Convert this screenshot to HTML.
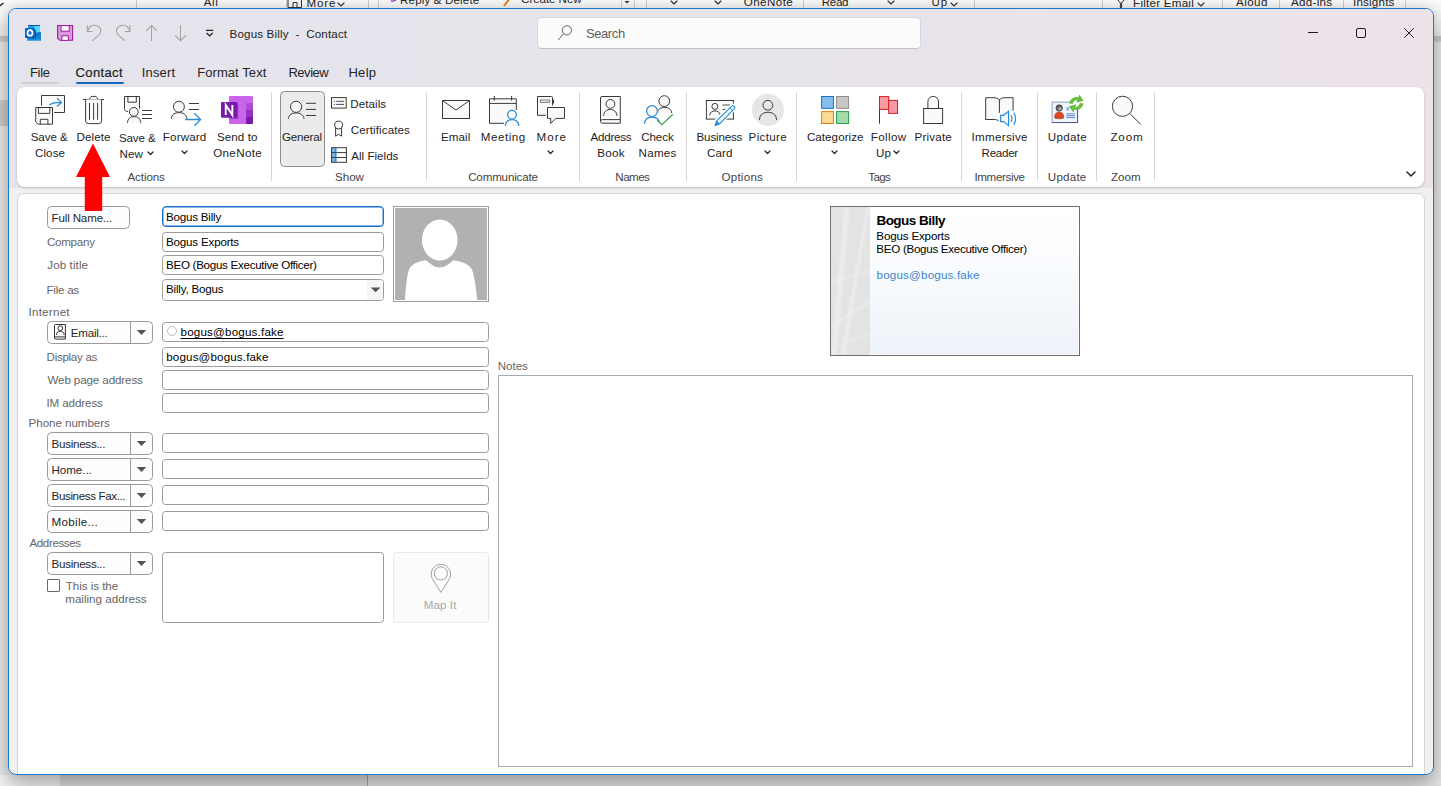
<!DOCTYPE html>
<html><head><meta charset="utf-8"><title>Bogus Billy - Contact</title>
<style>
html,body{margin:0;padding:0;}
body{width:1441px;height:786px;overflow:hidden;position:relative;background:#f0f0f0;font-family:"Liberation Sans",sans-serif;}
.a{position:absolute;box-sizing:border-box;}
.t{position:absolute;white-space:pre;}
svg{position:absolute;overflow:visible;}
#win{position:absolute;left:8px;top:8px;width:1426px;height:767px;box-sizing:border-box;border:1px solid #1b78cc;border-radius:8px;overflow:hidden;background:#f0f0f0;}
#winshadow{position:absolute;left:8px;top:8px;width:1426px;height:767px;border-radius:8px;box-shadow:0 12px 26px 2px rgba(0,0,0,.30),0 0 10px rgba(0,0,0,.10);}
#lav{position:absolute;left:0;top:0;width:1426px;height:179px;background:linear-gradient(90deg,#e5e4ec 0%,#e7e4eb 50%,#ece3e9 100%);}
#ribbon{position:absolute;left:17px;top:87px;width:1407px;height:100px;background:#fff;border-radius:8px;box-shadow:0 1px 3px rgba(0,0,0,.18);}
#panel{position:absolute;left:17px;top:193px;width:1408px;height:600px;background:#fff;border:1px solid #d4d4d4;border-radius:7px;box-sizing:border-box;}
.sep{position:absolute;top:92px;height:89px;width:1px;background:#d6d6d6;}
.inp{position:absolute;box-sizing:border-box;border:1px solid #9b9b9b;border-radius:3.5px;background:#fff;}
.btn{position:absolute;box-sizing:border-box;border:1px solid #9a9a9a;border-radius:4.5px;background:#fdfdfd;}

</style></head><body>
<div class="a" id="bgtop" style="left:0;top:0;width:1441px;height:36px;background:linear-gradient(#fbfbfb,#f3f3f3);"></div><div class="a" style="left:0;top:36px;width:1441px;height:6px;background:linear-gradient(#c9c9c9,#d6d6d6);"></div><div class="a" style="left:0;top:42px;width:1441px;height:744px;background:#f0f0f0;"></div><div class="a" style="left:0;top:100px;width:9px;height:26px;background:#d2d2d2;"></div><div class="a" style="left:0;top:775px;width:60px;height:11px;background:#fbfbfb;"></div><div class="a" style="left:60px;top:775px;width:307px;height:11px;background:#e4e4e4;"></div><div class="a" style="left:367px;top:775px;width:1074px;height:11px;background:#ececec;"></div><div class="a" style="left:367px;top:42px;width:1px;height:744px;background:#b0b0b0;"></div><span class="t " style="left:203.73px;top:-5px;font-size:11.6px;line-height:14px;letter-spacing:0.570px;color:#262626;">All</span>
<span class="t " style="left:306.56px;top:-4px;font-size:11.6px;line-height:14px;letter-spacing:0.844px;color:#262626;">More</span>
<span class="t " style="left:400.06px;top:-7px;font-size:11.6px;line-height:14px;letter-spacing:0.144px;color:#262626;">Reply &amp; Delete</span>
<span class="t " style="left:521.12px;top:-8px;font-size:11.6px;line-height:14px;letter-spacing:-0.075px;color:#262626;">Create New</span>
<span class="t " style="left:743.75px;top:-5px;font-size:11.6px;line-height:14px;letter-spacing:0.443px;color:#262626;">OneNote</span>
<span class="t " style="left:821.76px;top:-5px;font-size:11.6px;line-height:14px;letter-spacing:-0.344px;color:#262626;">Read</span>
<span class="t " style="left:931.41px;top:-5px;font-size:11.6px;line-height:14px;letter-spacing:0.947px;color:#262626;">Up</span>
<span class="t " style="left:1133.06px;top:-4px;font-size:11.6px;line-height:14px;letter-spacing:0.247px;color:#262626;">Filter Email</span>
<span class="t " style="left:1235.98px;top:-5px;font-size:11.6px;line-height:14px;letter-spacing:0.452px;color:#262626;">Aloud</span>
<span class="t " style="left:1290.98px;top:-5px;font-size:11.6px;line-height:14px;letter-spacing:0.302px;color:#262626;">Add-ins</span>
<span class="t " style="left:1352.94px;top:-5px;font-size:11.6px;line-height:14px;letter-spacing:0.217px;color:#262626;">Insights</span>
<div class="a" style="left:136.0px;top:0;width:1px;height:9px;background:#cfcfcf;"></div><div class="a" style="left:286.0px;top:0;width:1px;height:9px;background:#cfcfcf;"></div><div class="a" style="left:367.5px;top:0;width:1px;height:9px;background:#cfcfcf;"></div><div class="a" style="left:377.5px;top:0;width:1px;height:9px;background:#cfcfcf;"></div><div class="a" style="left:620.7px;top:0;width:1px;height:9px;background:#cfcfcf;"></div><div class="a" style="left:634.3px;top:0;width:1px;height:9px;background:#cfcfcf;"></div><div class="a" style="left:645.7px;top:0;width:1px;height:9px;background:#cfcfcf;"></div><div class="a" style="left:802.7px;top:0;width:1px;height:9px;background:#cfcfcf;"></div><div class="a" style="left:974.0px;top:0;width:1px;height:9px;background:#cfcfcf;"></div><div class="a" style="left:1101.7px;top:0;width:1px;height:9px;background:#cfcfcf;"></div><div class="a" style="left:1222.3px;top:0;width:1px;height:9px;background:#cfcfcf;"></div><div class="a" style="left:1279.3px;top:0;width:1px;height:9px;background:#cfcfcf;"></div><div class="a" style="left:1342.7px;top:0;width:1px;height:9px;background:#cfcfcf;"></div><div class="a" style="left:1405.0px;top:0;width:1px;height:9px;background:#cfcfcf;"></div><svg style="left:337.00px;top:2.00px" width="8" height="5"><path d="M1 1 L4.0 4 L7 1" fill="none" stroke="#333" stroke-width="1.1" stroke-linecap="round" stroke-linejoin="round"/></svg><svg style="left:670.00px;top:0.00px" width="8" height="5"><path d="M1 1 L4.0 4 L7 1" fill="none" stroke="#333" stroke-width="1.1" stroke-linecap="round" stroke-linejoin="round"/></svg><svg style="left:714.30px;top:0.00px" width="8" height="5"><path d="M1 1 L4.0 4 L7 1" fill="none" stroke="#333" stroke-width="1.1" stroke-linecap="round" stroke-linejoin="round"/></svg><svg style="left:886.70px;top:0.00px" width="8" height="5"><path d="M1 1 L4.0 4 L7 1" fill="none" stroke="#333" stroke-width="1.1" stroke-linecap="round" stroke-linejoin="round"/></svg><svg style="left:950.00px;top:2.00px" width="8" height="5"><path d="M1 1 L4.0 4 L7 1" fill="none" stroke="#333" stroke-width="1.1" stroke-linecap="round" stroke-linejoin="round"/></svg><svg style="left:1196.50px;top:2.00px" width="8" height="5"><path d="M1 1 L4.0 4 L7 1" fill="none" stroke="#333" stroke-width="1.1" stroke-linecap="round" stroke-linejoin="round"/></svg><svg style="left:0;top:0" width="1441" height="10"><path d="M1116.5 -2 L1120.4 3 L1120.4 9 M1125.5 -2 L1121.6 3 L1121.6 9" stroke="#333" fill="none" stroke-width="1"/><path d="M288 -3 L288 7.5 L301.5 7.5 L301.5 -3 M293 7.5 L293 2.5 L297 2.5 L297 7.5" stroke="#333" fill="none" stroke-width="1"/><path d="M391 1 Q396 2 397 -3" stroke="#9a3ab8" stroke-width="1.4" fill="none"/><path d="M504 6 L510 -2" stroke="#e8820e" stroke-width="2"/><path d="M624.5 1 L627 3.5 L629.5 1" fill="#333"/><path d="M-1 6.4 L3.6 3" stroke="#222" stroke-width="1.4"/></svg><div id="winshadow"></div><div id="win"><div class="a" id="in" style="left:-9px;top:-9px;width:1441px;height:786px;"><div id="lav" style="left:9px;top:9px;"></div><div id="ribbon"></div><div id="panel"></div><span class="t " style="left:229.56px;top:27px;font-size:11.6px;line-height:14px;letter-spacing:0.158px;color:#242424;">Bogus Billy  -  Contact</span>
<div class="a" style="left:537px;top:17px;width:384px;height:32px;background:#fbfbfb;border-radius:4.5px;border:1px solid #d9d7dc;border-bottom-color:#c3c1c7;"></div><span class="t " style="left:585.92px;top:25px;font-size:13px;line-height:17px;letter-spacing:-0.393px;color:#5e5e5e;">Search</span>
<span class="t " style="left:29.94px;top:64px;font-size:13px;line-height:17px;letter-spacing:-0.271px;color:#242424;">File</span>
<span class="t " style="left:75.59px;top:64px;font-size:13px;line-height:17px;letter-spacing:0.365px;color:#242424;-webkit-text-stroke:.22px #1a1a1a;">Contact</span>
<span class="t " style="left:141.81px;top:64px;font-size:13px;line-height:17px;letter-spacing:0.150px;color:#242424;">Insert</span>
<span class="t " style="left:197.19px;top:64px;font-size:13px;line-height:17px;letter-spacing:0.075px;color:#242424;">Format Text</span>
<span class="t " style="left:288.44px;top:64px;font-size:13px;line-height:17px;letter-spacing:-0.469px;color:#242424;">Review</span>
<span class="t " style="left:348.44px;top:64px;font-size:13px;line-height:17px;letter-spacing:0.292px;color:#242424;">Help</span>
<div class="a" style="left:21px;top:82px;width:38px;height:2px;background:#d2d0d2;border-radius:1px;"></div><div class="a" style="left:76px;top:82px;width:48px;height:2.4px;background:#1568c0;border-radius:1.2px;"></div><div class="sep" style="left:271.0px"></div><div class="sep" style="left:426.0px"></div><div class="sep" style="left:579.0px"></div><div class="sep" style="left:686.0px"></div><div class="sep" style="left:796.0px"></div><div class="sep" style="left:961.0px"></div><div class="sep" style="left:1037.0px"></div><div class="sep" style="left:1096.0px"></div><div class="sep" style="left:1154.0px"></div><div class="a" style="left:280px;top:91px;width:45px;height:76px;background:#ebebeb;border:1px solid #8e8e8e;border-radius:4.5px;"></div><span class="t " style="left:30.73px;top:130px;font-size:11.6px;line-height:14px;letter-spacing:-0.087px;color:#242424;">Save &amp;</span>
<span class="t " style="left:34.92px;top:146px;font-size:11.6px;line-height:14px;letter-spacing:0.113px;color:#242424;">Close</span>
<span class="t " style="left:76.56px;top:130px;font-size:11.6px;line-height:14px;letter-spacing:0.087px;color:#242424;">Delete</span>
<span class="t " style="left:118.98px;top:131px;font-size:11.6px;line-height:14px;letter-spacing:-0.138px;color:#242424;">Save &amp;</span>
<span class="t " style="left:119.56px;top:147px;font-size:11.6px;line-height:14px;letter-spacing:0.102px;color:#242424;">New</span>
<span class="t " style="left:162.81px;top:130px;font-size:11.6px;line-height:14px;letter-spacing:0.151px;color:#242424;">Forward</span>
<span class="t " style="left:216.98px;top:130px;font-size:11.6px;line-height:14px;letter-spacing:0.089px;color:#242424;">Send to</span>
<span class="t " style="left:213.20px;top:146px;font-size:11.6px;line-height:14px;letter-spacing:0.359px;color:#242424;">OneNote</span>
<span class="t " style="left:281.92px;top:130px;font-size:11.6px;line-height:14px;letter-spacing:-0.193px;color:#242424;">General</span>
<span class="t " style="left:441.06px;top:130px;font-size:11.6px;line-height:14px;letter-spacing:0.051px;color:#242424;">Email</span>
<span class="t " style="left:480.81px;top:130px;font-size:11.6px;line-height:14px;letter-spacing:0.531px;color:#242424;">Meeting</span>
<span class="t " style="left:536.56px;top:130px;font-size:11.6px;line-height:14px;letter-spacing:1.010px;color:#242424;">More</span>
<span class="t " style="left:590.48px;top:130px;font-size:11.6px;line-height:14px;letter-spacing:-0.227px;color:#242424;">Address</span>
<span class="t " style="left:597.31px;top:146px;font-size:11.6px;line-height:14px;letter-spacing:0.245px;color:#242424;">Book</span>
<span class="t " style="left:641.17px;top:130px;font-size:11.6px;line-height:14px;letter-spacing:-0.078px;color:#242424;">Check</span>
<span class="t " style="left:638.56px;top:146px;font-size:11.6px;line-height:14px;letter-spacing:0.281px;color:#242424;">Names</span>
<span class="t " style="left:696.56px;top:130px;font-size:11.6px;line-height:14px;letter-spacing:-0.172px;color:#242424;">Business</span>
<span class="t " style="left:706.92px;top:146px;font-size:11.6px;line-height:14px;letter-spacing:0.146px;color:#242424;">Card</span>
<span class="t " style="left:748.56px;top:130px;font-size:11.6px;line-height:14px;letter-spacing:0.352px;color:#242424;">Picture</span>
<span class="t " style="left:806.92px;top:130px;font-size:11.6px;line-height:14px;letter-spacing:0.057px;color:#242424;">Categorize</span>
<span class="t " style="left:870.81px;top:130px;font-size:11.6px;line-height:14px;letter-spacing:0.381px;color:#242424;">Follow</span>
<span class="t " style="left:876.11px;top:146px;font-size:11.6px;line-height:14px;letter-spacing:0.047px;color:#242424;">Up</span>
<span class="t " style="left:914.56px;top:130px;font-size:11.6px;line-height:14px;letter-spacing:0.185px;color:#242424;">Private</span>
<span class="t " style="left:971.44px;top:130px;font-size:11.6px;line-height:14px;letter-spacing:0.326px;color:#242424;">Immersive</span>
<span class="t " style="left:981.56px;top:146px;font-size:11.6px;line-height:14px;letter-spacing:-0.281px;color:#242424;">Reader</span>
<span class="t " style="left:1047.86px;top:130px;font-size:11.6px;line-height:14px;letter-spacing:0.303px;color:#242424;">Update</span>
<span class="t " style="left:1110.39px;top:130px;font-size:11.6px;line-height:14px;letter-spacing:0.906px;color:#242424;">Zoom</span>
<span class="t " style="left:350.31px;top:97px;font-size:11.6px;line-height:14px;letter-spacing:0.068px;color:#242424;">Details</span>
<span class="t " style="left:350.67px;top:123px;font-size:11.6px;line-height:14px;letter-spacing:0.114px;color:#242424;">Certificates</span>
<span class="t " style="left:351.23px;top:149px;font-size:11.6px;line-height:14px;letter-spacing:0.016px;color:#242424;">All Fields</span>
<svg style="left:147.00px;top:150.75px" width="7" height="4.5"><path d="M1 1 L3.5 3.5 L6 1" fill="none" stroke="#2a2a2a" stroke-width="1.3" stroke-linecap="round" stroke-linejoin="round"/></svg><svg style="left:181.00px;top:150.25px" width="7" height="4.5"><path d="M1 1 L3.5 3.5 L6 1" fill="none" stroke="#2a2a2a" stroke-width="1.3" stroke-linecap="round" stroke-linejoin="round"/></svg><svg style="left:547.25px;top:149.75px" width="7" height="4.5"><path d="M1 1 L3.5 3.5 L6 1" fill="none" stroke="#2a2a2a" stroke-width="1.3" stroke-linecap="round" stroke-linejoin="round"/></svg><svg style="left:764.00px;top:149.75px" width="7" height="4.5"><path d="M1 1 L3.5 3.5 L6 1" fill="none" stroke="#2a2a2a" stroke-width="1.3" stroke-linecap="round" stroke-linejoin="round"/></svg><svg style="left:831.00px;top:149.75px" width="7" height="4.5"><path d="M1 1 L3.5 3.5 L6 1" fill="none" stroke="#2a2a2a" stroke-width="1.3" stroke-linecap="round" stroke-linejoin="round"/></svg><svg style="left:893.00px;top:150.25px" width="7" height="4.5"><path d="M1 1 L3.5 3.5 L6 1" fill="none" stroke="#2a2a2a" stroke-width="1.3" stroke-linecap="round" stroke-linejoin="round"/></svg><span class="t " style="left:127.48px;top:170px;font-size:11.6px;line-height:14px;letter-spacing:-0.099px;color:#444444;">Actions</span>
<span class="t " style="left:334.98px;top:170px;font-size:11.6px;line-height:14px;letter-spacing:-0.005px;color:#444444;">Show</span>
<span class="t " style="left:468.17px;top:170px;font-size:11.6px;line-height:14px;letter-spacing:-0.169px;color:#444444;">Communicate</span>
<span class="t " style="left:615.31px;top:170px;font-size:11.6px;line-height:14px;letter-spacing:-0.531px;color:#444444;">Names</span>
<span class="t " style="left:721.45px;top:170px;font-size:11.6px;line-height:14px;letter-spacing:0.250px;color:#444444;">Options</span>
<span class="t " style="left:868.25px;top:170px;font-size:11.6px;line-height:14px;letter-spacing:-0.609px;color:#444444;">Tags</span>
<span class="t " style="left:974.44px;top:170px;font-size:11.6px;line-height:14px;letter-spacing:-0.361px;color:#444444;">Immersive</span>
<span class="t " style="left:1047.86px;top:170px;font-size:11.6px;line-height:14px;letter-spacing:0.203px;color:#444444;">Update</span>
<span class="t " style="left:1110.89px;top:170px;font-size:11.6px;line-height:14px;letter-spacing:0.073px;color:#444444;">Zoom</span>
<svg style="left:1406.00px;top:171.00px" width="10" height="6"><path d="M1 1 L5.0 5 L9 1" fill="none" stroke="#222" stroke-width="1.5" stroke-linecap="round" stroke-linejoin="round"/></svg><div class="btn" style="left:47px;top:206px;width:83px;height:23px;"></div><span class="t " style="left:51.56px;top:211px;font-size:11.6px;line-height:14px;letter-spacing:-0.159px;color:#262626;">Full Name...</span>
<div class="inp" style="left:162px;top:206px;width:222px;height:21px;border:1px solid #1a6fc8;border-radius:4px;box-shadow:inset 0 0 0 .45px #1a6fc8;"></div><div class="inp" style="left:162px;top:232px;width:222px;height:20px;"></div><div class="inp" style="left:162px;top:255px;width:222px;height:20px;"></div><div class="inp" style="left:162px;top:279px;width:222px;height:22px;"></div><div class="inp" style="left:162px;top:322px;width:327px;height:20px;"></div><div class="inp" style="left:162px;top:347px;width:327px;height:20px;"></div><div class="inp" style="left:162px;top:370px;width:327px;height:20px;"></div><div class="inp" style="left:162px;top:393px;width:327px;height:20px;"></div><div class="inp" style="left:162px;top:433px;width:327px;height:20px;"></div><div class="inp" style="left:162px;top:459px;width:327px;height:20px;"></div><div class="inp" style="left:162px;top:485px;width:327px;height:20px;"></div><div class="inp" style="left:162px;top:511px;width:327px;height:20px;"></div><div class="inp" style="left:162px;top:552px;width:222px;height:71px;"></div><div class="a" style="left:393px;top:552px;width:96px;height:71px;border:1px solid #e9e9e9;border-radius:3.5px;background:#fbfbfb;"></div><div class="a" style="left:367px;top:280px;width:16px;height:20px;background:#f5f5f5;border-radius:0 3px 3px 0;"></div><svg style="left:0;top:0" width="1" height="1"><path d="M370.75 287.5 L380.5 287.5 L375.625 292.3 Z" fill="#555"/></svg><div class="btn" style="left:47px;top:321px;width:106px;height:23px;"></div><div class="a" style="left:130px;top:322px;width:1px;height:21px;background:#9a9a9a;"></div><svg style="left:0;top:0" width="1" height="1"><path d="M136.75 330 L146.25 330 L141.5 334.9 Z" fill="#555"/></svg><div class="btn" style="left:47px;top:432px;width:106px;height:23px;"></div><div class="a" style="left:130px;top:433px;width:1px;height:21px;background:#9a9a9a;"></div><svg style="left:0;top:0" width="1" height="1"><path d="M136.75 441 L146.25 441 L141.5 445.9 Z" fill="#555"/></svg><div class="btn" style="left:47px;top:458px;width:106px;height:23px;"></div><div class="a" style="left:130px;top:459px;width:1px;height:21px;background:#9a9a9a;"></div><svg style="left:0;top:0" width="1" height="1"><path d="M136.75 467 L146.25 467 L141.5 471.9 Z" fill="#555"/></svg><div class="btn" style="left:47px;top:484px;width:106px;height:23px;"></div><div class="a" style="left:130px;top:485px;width:1px;height:21px;background:#9a9a9a;"></div><svg style="left:0;top:0" width="1" height="1"><path d="M136.75 493 L146.25 493 L141.5 497.9 Z" fill="#555"/></svg><div class="btn" style="left:47px;top:510px;width:106px;height:23px;"></div><div class="a" style="left:130px;top:511px;width:1px;height:21px;background:#9a9a9a;"></div><svg style="left:0;top:0" width="1" height="1"><path d="M136.75 519 L146.25 519 L141.5 523.9 Z" fill="#555"/></svg><div class="btn" style="left:47px;top:552px;width:106px;height:23px;"></div><div class="a" style="left:130px;top:553px;width:1px;height:21px;background:#9a9a9a;"></div><svg style="left:0;top:0" width="1" height="1"><path d="M136.75 561 L146.25 561 L141.5 565.9 Z" fill="#555"/></svg><span class="t " style="left:46.92px;top:235px;font-size:11.6px;line-height:14px;letter-spacing:-0.255px;color:#666666;">Company</span>
<span class="t " style="left:47.33px;top:258px;font-size:11.6px;line-height:14px;letter-spacing:0.090px;color:#666666;">Job title</span>
<span class="t " style="left:46.56px;top:283px;font-size:11.6px;line-height:14px;letter-spacing:-0.258px;color:#666666;">File as</span>
<span class="t " style="left:28.44px;top:305px;font-size:11.6px;line-height:14px;letter-spacing:0.261px;color:#666666;">Internet</span>
<span class="t " style="left:70.81px;top:326px;font-size:11.6px;line-height:14px;letter-spacing:-0.239px;color:#262626;">Email...</span>
<span class="t " style="left:46.56px;top:350px;font-size:11.6px;line-height:14px;letter-spacing:-0.293px;color:#666666;">Display as</span>
<span class="t " style="left:47.45px;top:373px;font-size:11.6px;line-height:14px;letter-spacing:-0.110px;color:#666666;">Web page address</span>
<span class="t " style="left:46.44px;top:396px;font-size:11.6px;line-height:14px;letter-spacing:-0.097px;color:#666666;">IM address</span>
<span class="t " style="left:28.56px;top:416px;font-size:11.6px;line-height:14px;letter-spacing:-0.043px;color:#666666;">Phone numbers</span>
<span class="t " style="left:51.56px;top:437px;font-size:11.6px;line-height:14px;letter-spacing:-0.272px;color:#262626;">Business...</span>
<span class="t " style="left:51.56px;top:463px;font-size:11.6px;line-height:14px;letter-spacing:-0.060px;color:#262626;">Home...</span>
<span class="t " style="left:51.56px;top:489px;font-size:11.6px;line-height:14px;letter-spacing:-0.376px;color:#262626;">Business Fax...</span>
<span class="t " style="left:51.56px;top:515px;font-size:11.6px;line-height:14px;letter-spacing:0.303px;color:#262626;">Mobile...</span>
<span class="t " style="left:29.48px;top:536px;font-size:11.6px;line-height:14px;letter-spacing:-0.389px;color:#666666;">Addresses</span>
<span class="t " style="left:51.56px;top:557px;font-size:11.6px;line-height:14px;letter-spacing:-0.272px;color:#262626;">Business...</span>
<span class="t " style="left:65.75px;top:579px;font-size:11.6px;line-height:14px;letter-spacing:-0.038px;color:#666666;">This is the</span>
<span class="t " style="left:65.23px;top:592px;font-size:11.6px;line-height:14px;letter-spacing:0.012px;color:#666666;">mailing address</span>
<span class="t " style="left:423.76px;top:598px;font-size:11.6px;line-height:14px;letter-spacing:0.079px;color:#a8a8a8;">Map It</span>
<span class="t " style="left:497.81px;top:359px;font-size:11.6px;line-height:14px;letter-spacing:-0.047px;color:#666666;">Notes</span>
<span class="t " style="left:166.06px;top:210px;font-size:11.6px;line-height:14px;letter-spacing:-0.216px;color:#000000;">Bogus Billy</span>
<span class="t " style="left:166.06px;top:235px;font-size:11.6px;line-height:14px;letter-spacing:-0.193px;color:#000000;">Bogus Exports</span>
<span class="t " style="left:166.06px;top:258px;font-size:11.6px;line-height:14px;letter-spacing:-0.287px;color:#000000;">BEO (Bogus Executive Officer)</span>
<span class="t " style="left:166.06px;top:282px;font-size:11.6px;line-height:14px;letter-spacing:-0.193px;color:#000000;">Billy, Bogus</span>
<span class="t " style="left:166.27px;top:350px;font-size:11.6px;line-height:14px;letter-spacing:0.144px;color:#000000;">bogus@bogus.fake</span>
<span class="t " style="left:180.52px;top:325px;font-size:11.6px;line-height:14px;letter-spacing:0.194px;color:#000000;text-decoration:underline;text-underline-offset:1.5px;text-decoration-thickness:.9px;">bogus@bogus.fake</span>
<div class="a" style="left:167px;top:326px;width:10px;height:10px;border:1px solid #aebfce;border-radius:50%;background:#fff;"></div><div class="a" style="left:47px;top:579px;width:13px;height:13px;border:1px solid #6c6c6c;border-radius:1px;background:#fff;"></div><div class="a" style="left:393px;top:206px;width:96px;height:96px;border:1px solid #9c9c9c;background:#fff;"></div><svg style="left:395px;top:208px" width="92" height="92" viewBox="0 0 91.5 92" preserveAspectRatio="none"><rect width="91.5" height="92" fill="#b1b1b1"/><path d="M9.8 92 C10.8 80 11.6 69 13.6 62.5 C15.6 56.5 22 53.6 31 52.3 C36 57 40 59.5 44.5 59.5 C49 59.5 53 57 58 52.3 C67 53.6 74.4 56.5 76.9 62.5 C79.2 69 80.6 80 81.8 92 Z" fill="#fff"/><ellipse cx="44.5" cy="32" rx="17.7" ry="20.5" fill="#fff"/></svg><div class="a" style="left:498px;top:375px;width:915px;height:392px;border:1px solid #a3abb3;background:#fff;"></div><div class="a" style="left:830px;top:206px;width:250px;height:150px;border:1px solid #6e6e6e;background:linear-gradient(#ffffff 0%,#fafcfe 35%,#eef3f9 100%);box-shadow:inset 0 0 0 1px #fff;"></div><div class="a" id="stripe" style="left:831px;top:207px;width:39px;height:148px;background:#e3e3e3;overflow:hidden;"><svg style="left:0;top:0" width="39" height="148" viewBox="0 0 39 148"><g stroke="#f4f4f4" fill="none" opacity=".55" style="filter:blur(.9px)"><path d="M3 148 L16 0" stroke-width="5"/><path d="M12 148 L37 0" stroke-width="3.5"/><path d="M0 75 L39 64" stroke-width="2"/><path d="M0 119 L39 95" stroke-width="2.5"/><path d="M0 141 L39 126" stroke-width="1.5"/></g></svg></div><span class="t " style="left:876.41px;top:212px;font-size:13.5px;line-height:17px;letter-spacing:-0.520px;color:#000;font-weight:bold;">Bogus Billy</span>
<span class="t " style="left:876.36px;top:229px;font-size:11.6px;line-height:14px;letter-spacing:-0.172px;color:#000;">Bogus Exports</span>
<span class="t " style="left:876.36px;top:242px;font-size:11.6px;line-height:14px;letter-spacing:-0.289px;color:#000;">BEO (Bogus Executive Officer)</span>
<span class="t " style="left:876.57px;top:268px;font-size:11.6px;line-height:14px;letter-spacing:0.184px;color:#3a86c8;">bogus@bogus.fake</span>
<svg style="left:0;top:0" width="1441" height="786" viewBox="0 0 1441 786"><rect x="28" y="25" width="12" height="8" fill="#1a9be2"/>
<rect x="34.2" y="25.6" width="5.8" height="6.9" fill="#50d8ff"/>
<rect x="28" y="25" width="12" height="0.9" fill="#0a4a9c"/>
<path d="M27.2 32.5 L41 32.5 L41 40.8 L27.2 40.8 Z" fill="#1b93de"/>
<path d="M41 32.3 L35.5 35.5 L41 40.3 Z" fill="#1580d2"/>
<path d="M36 34.8 L41 32" stroke="#0d4f9e" stroke-width=".7" fill="none"/>
<rect x="27.5" y="30" width="8.6" height="8.7" fill="#0a3f80" opacity=".75"/>
<rect x="25" y="28.1" width="10" height="9.8" rx=".6" fill="#0b68c9"/>
<ellipse cx="30" cy="32.9" rx="2.5" ry="2.75" fill="none" stroke="#fff" stroke-width="1.7"/>
<path d="M57.6 25.5 L72.6 25.5 L72.6 40.3 L59.8 40.3 L57.6 38.3 Z" fill="#dc9ade" stroke="#9a1c9c" stroke-width="1.1"/>
<rect x="61" y="25.6" width="8.2" height="5.6" fill="#fafafa" stroke="#9a1c9c" stroke-width="1"/>
<rect x="61.9" y="35.8" width="6.4" height="4.6" fill="#fafafa" stroke="#9a1c9c" stroke-width="1"/>
<path d="M87.3 25.2 L87.3 31.5 L92.2 31.5" stroke="#a2a2a2" stroke-width="1.05" fill="none" />
<path d="M87.6 31.2 C88.5 27.6 91.2 25.2 94.5 25.2 C98.2 25.2 100.8 28 100.8 31 C100.8 33 99.8 34.2 98.6 35.3 L92.3 40.8" stroke="#a2a2a2" stroke-width="1.05" fill="none" />
<path d="M130 25.2 L130 31.5 L125 31.5" stroke="#a2a2a2" stroke-width="1.05" fill="none" />
<path d="M129.7 31.2 C128.8 27.6 126.1 25.2 122.8 25.2 C119.1 25.2 116.5 28 116.5 31 C116.5 33 117.5 34.2 118.7 35.3 L125 40.8" stroke="#a2a2a2" stroke-width="1.05" fill="none" />
<path d="M151.5 40.9 L151.5 25.6 M146.2 30.9 L151.5 25.6 L156.9 30.9" stroke="#a2a2a2" stroke-width="1.05" fill="none" />
<path d="M180.5 25.2 L180.5 40.7 M175.1 35.4 L180.5 40.7 L185.9 35.4" stroke="#a2a2a2" stroke-width="1.05" fill="none" />
<path d="M206 30.3 L213.2 30.3" stroke="#222" stroke-width="1.3" fill="none" />
<path d="M206.6 33 L209.6 35.9 L212.7 33" stroke="#222" stroke-width="1.3" fill="none" />
<circle cx="566.9" cy="30.3" r="4.6" stroke="#5e5e5e" stroke-width="1.0" fill="none"/>
<path d="M563.6 33.7 L558.3 39.9" stroke="#5e5e5e" stroke-width="1.0" fill="none" />
<path d="M1308 32.5 L1318 32.5" stroke="#1c1c1c" stroke-width="1" fill="none" />
<rect x="1356.5" y="28.5" width="9" height="9" rx="1.5" stroke="#1c1c1c" stroke-width="1" fill="none"/>
<path d="M1404.3 28.3 L1413.7 37.7 M1413.7 28.3 L1404.3 37.7" stroke="#1c1c1c" stroke-width="1" fill="none" />
<path d="M41.5 105.7 L41.5 95.5 L64.5 95.5 L64.5 112.5 L54.2 112.5" stroke="#3a3a3a" stroke-width="1" fill="#fafafa" />
<path d="M49.5 105.2 C51.5 102.8 54 102.3 61.3 102.4 M57 98.3 L61.5 102.4 L57 106.5" stroke="#2b8cd6" stroke-width="1.25" fill="none" />
<path d="M35.7 107.5 L52.5 107.5 L52.5 124.2 L38 124.2 L35.7 122 Z" stroke="#3a3a3a" stroke-width="1" fill="#fafafa" />
<path d="M38.4 107.5 L38.4 113.4 L49.8 113.4 L49.8 107.5" stroke="#3a3a3a" stroke-width="1" fill="none" />
<path d="M40.3 124.2 L40.3 119.3 L47.9 119.3 L47.9 124.2" stroke="#3a3a3a" stroke-width="1" fill="none" />
<path d="M83 99.5 L104 99.5" stroke="#3a3a3a" stroke-width="1" fill="none" />
<path d="M89.5 99.5 L90.4 97.4 Q90.9 96.4 92 96.4 L95.2 96.4 Q96.3 96.4 96.8 97.4 L97.7 99.5" stroke="#3a3a3a" stroke-width="1" fill="#fafafa" />
<path d="M85.6 99.5 L85.6 120.8 Q85.6 123.6 88.4 123.6 L98.8 123.6 Q101.6 123.6 101.6 120.8 L101.6 99.5" stroke="#3a3a3a" stroke-width="1" fill="#fafafa" />
<path d="M89.5 103 L89.5 119.8 M93.6 103 L93.6 119.8 M97.6 103 L97.6 119.8" stroke="#3a3a3a" stroke-width="1" fill="none" />
<path d="M128 111.6 C125.5 111.3 124.5 110.5 124.5 108.6 L124.5 96.5 L139.5 96.5 L139.5 108.6" stroke="#3a3a3a" stroke-width="1" fill="#fafafa" />
<path d="M127.9 96.5 L127.9 102.2 L136.3 102.2 L136.3 96.5" stroke="#3a3a3a" stroke-width="1" fill="none" />
<path d="M127.4 122.9 C127.735 118.175 130.75 116.6 134.10000000000002 116.6 C137.45000000000002 116.6 140.465 118.175 140.8 122.9" stroke="#3a3a3a" stroke-width="1" fill="#f7f7f7"/>
<circle cx="133.8" cy="111.9" r="4.4" stroke="#3a3a3a" stroke-width="1" fill="#f7f7f7"/>
<path d="M142 110.5 L152 110.5 M142 114.5 L152 114.5 M142 118.5 L152 118.5" stroke="#3a3a3a" stroke-width="1" fill="none" />
<path d="M171.3 118.9 C171.69 114.175 175.20000000000002 112.6 179.10000000000002 112.6 C183.0 112.6 186.51000000000002 114.175 186.9 118.9" stroke="#3a3a3a" stroke-width="1" fill="#f7f7f7"/>
<circle cx="178.9" cy="106.75" r="5.5" stroke="#3a3a3a" stroke-width="1" fill="#f7f7f7"/>
<path d="M189 103.5 L199 103.5 M189 109.5 L199 109.5" stroke="#3a3a3a" stroke-width="1" fill="none" />
<path d="M185.2 119.5 L200.6 119.5 M194.3 113.3 L200.6 119.5 L194.3 125.8" stroke="#2b8cd6" stroke-width="1.3" fill="none" />
<rect x="229" y="96" width="24" height="28" rx="1.2" fill="#ca64ea"/>
<rect x="246.1" y="103.1" width="6.9" height="7" fill="#ae4bd5"/>
<rect x="246.1" y="110" width="6.9" height="7" fill="#9332bf"/>
<path d="M246.1 116.9 L253 116.9 L253 122.8 Q253 124 251.8 124 L246.1 124 Z" fill="#7719aa"/>
<rect x="229.5" y="103.5" width="8.8" height="15.6" fill="#8a3ab0" opacity=".7"/>
<rect x="221" y="102" width="16.4" height="15.8" rx="1" fill="#7719aa"/>
<path d="M225.75 115 L225.75 105 L232.35 115 L232.35 105" stroke="#fff" stroke-width="1.9" fill="none" stroke-linejoin="miter" stroke-miterlimit="10"/>
<path d="M288.3 118.9 C288.6925 114.475 292.225 113 296.15 113 C300.075 113 303.6075 114.475 304 118.9" stroke="#3a3a3a" stroke-width="1" fill="#f7f7f7"/>
<circle cx="296.1" cy="106.8" r="5.6" stroke="#3a3a3a" stroke-width="1" fill="#f7f7f7"/>
<path d="M306 103.3 L316 103.3 M306 109.4 L316 109.4 M306 115.5 L316 115.5" stroke="#3a3a3a" stroke-width="1" fill="none" />
<rect x="331.5" y="97.6" width="14.7" height="10.5" rx="0" stroke="#3a3a3a" stroke-width="1" fill="#fafafa"/>
<path d="M336.2 101.3 L344 101.3 M336.2 104.4 L344 104.4" stroke="#3a3a3a" stroke-width="0.9" fill="none" />
<path d="M333.8 101.3 L335 101.3 M333.8 104.4 L335 104.4" stroke="#3a3a3a" stroke-width="0.9" fill="none" />
<path d="M335.6 128 L335.6 136.2 L338.6 134.2 L341.6 136.2 L341.6 128" stroke="#3a3a3a" stroke-width="1" fill="#fafafa" />
<circle cx="338.6" cy="125.1" r="4" stroke="#3a3a3a" stroke-width="1" fill="#fafafa"/>
<rect x="331.6" y="147.7" width="4.3" height="14.6" fill="#76b8ee"/>
<rect x="331.6" y="147.7" width="14.8" height="14.6" rx="0" stroke="#3a3a3a" stroke-width="1" fill="none"/>
<path d="M331.6 152.6 L346.4 152.6 M331.6 157.5 L346.4 157.5" stroke="#3a3a3a" stroke-width="1" fill="none" />
<path d="M335.9 147.7 L335.9 162.3" stroke="#1a6fc8" stroke-width="1.1" fill="none" />
<rect x="442.5" y="100.5" width="27" height="18" rx="0" stroke="#3a3a3a" stroke-width="1" fill="#fafafa"/>
<path d="M442.6 100.7 L456 110 L469.4 100.7" stroke="#3a3a3a" stroke-width="1" fill="none" />
<path d="M516.3 110 L516.3 98.8 L489.5 98.8 L489.5 123.3 L504 123.3" stroke="#3a3a3a" stroke-width="1" fill="#fafafa" />
<path d="M489.5 103.4 L516.3 103.4" stroke="#3a3a3a" stroke-width="1" fill="none" />
<path d="M494.3 96 L494.3 100.6 M511.6 96 L511.6 100.6" stroke="#3a3a3a" stroke-width="1" fill="none" />
<path d="M505.3 126 C505.6375 121.275 508.675 119.7 512.05 119.7 C515.425 119.7 518.4625 121.275 518.8 126" stroke="#2b8cd6" stroke-width="1.25" fill="#fafafa"/>
<circle cx="512" cy="114.8" r="4.4" stroke="#2b8cd6" stroke-width="1.25" fill="#fafafa"/>
<path d="M545.8 115.3 L537.5 115.3 L537.5 96.5 L551.5 96.5 Q552.5 96.5 552.5 97.5 L552.5 105.5" stroke="#3a3a3a" stroke-width="1" fill="#fafafa" />
<path d="M553.4 99.8 L553.4 103.6" stroke="#3a3a3a" stroke-width="1.3" fill="none" />
<rect x="540.3" y="100" width="9.2" height="2.4" rx="0" stroke="#777" stroke-width="0.9" fill="#e8e8e8"/>
<path d="M547.5 107.5 L564.5 107.5 L564.5 118.4 L555.8 118.4 L550.7 123.4 L550.7 118.4 L547.5 118.4 Z" stroke="#3a3a3a" stroke-width="1" fill="#fafafa" />
<path d="M602 96.5 L620.3 96.5 L620.3 123.2 L602.3 123.2 Q600.5 123.2 600.5 121.4 L600.5 98 Q600.5 96.5 602 96.5 Z" stroke="#3a3a3a" stroke-width="1" fill="#fafafa" />
<path d="M600.6 121 Q600.8 119.6 602.4 119.6 L620.3 119.6" stroke="#3a3a3a" stroke-width="1" fill="none" />
<path d="M603.6 115.8 C603.9325 111.075 606.925 109.5 610.25 109.5 C613.575 109.5 616.5675 111.075 616.9 115.8" stroke="#3a3a3a" stroke-width="1" fill="#f7f7f7"/>
<circle cx="610.4" cy="103.9" r="4.4" stroke="#3a3a3a" stroke-width="1" fill="#f7f7f7"/>
<path d="M657.5 113 C657.855 108.80000000000001 661.05 107.4 664.6 107.4 C668.1500000000001 107.4 671.345 108.80000000000001 671.7 113" stroke="#3a3a3a" stroke-width="1" fill="#f7f7f7"/>
<circle cx="664.3" cy="101.1" r="5.4" stroke="#3a3a3a" stroke-width="1" fill="#f7f7f7"/>
<circle cx="652" cy="111.1" r="6.3" fill="#fff"/>
<path d="M644.5 123.8 C644.875 118.77499999999999 648.25 117.1 652.0 117.1 C655.75 117.1 659.125 118.77499999999999 659.5 123.8" stroke="#2b8cd6" stroke-width="1.25" fill="#fafafa"/>
<circle cx="652" cy="111.1" r="5.4" stroke="#2b8cd6" stroke-width="1.25" fill="#fafafa"/>
<path d="M656 119 L662 125.5 L674 113.5 L674 127 L656 127 Z" fill="#fff"/>
<path d="M657.3 120.3 L661.9 124.7 L672.9 114.3" stroke="#3aa555" stroke-width="1.25" fill="none" />
<rect x="706.4" y="100.5" width="27" height="18.6" rx="0" stroke="#3a3a3a" stroke-width="1" fill="#fafafa"/>
<path d="M709.7 115.4 C709.9625000000001 112.025 712.325 110.9 714.95 110.9 C717.575 110.9 719.9375 112.025 720.2 115.4" stroke="#3a3a3a" stroke-width="1" fill="#f7f7f7"/>
<circle cx="714.9" cy="106.4" r="3" stroke="#3a3a3a" stroke-width="1" fill="#f7f7f7"/>
<path d="M722.5 105 L730.2 105 M722.5 109.4 L727 109.4" stroke="#3a3a3a" stroke-width="0.9" fill="none" />
<path d="M714.2 126.2 L716.2 120.3 L731.6 105.6 Q733.2 104.4 734.6 105.8 Q736 107.2 734.7 108.7 L720 124.1 Z" fill="#fff" stroke="#fff" stroke-width="3"/>
<path d="M715 125.6 L716.8 120.6 L731.8 106.2 Q733.1 105.2 734.2 106.3 Q735.3 107.4 734.3 108.6 L719.9 123.7 Z" fill="#f4f9fd" stroke="#2b8cd6" stroke-width="1.15" stroke-linejoin="round"/>
<path d="M715 125.6 L716.8 120.6 L719.9 123.7 Z" fill="#2b8cd6"/>
<path d="M729.7 108 L732.5 110.7" stroke="#2b8cd6" stroke-width="1" fill="none" />
<circle cx="767.9" cy="109.8" r="16" fill="#e6e6e6"/>
<path d="M759.4 119.9 C759.8299999999999 114.2 763.7 112.3 768.0 112.3 C772.3 112.3 776.1700000000001 114.2 776.6 119.9" stroke="#3a3a3a" stroke-width="1" fill="none"/>
<circle cx="767.9" cy="105.3" r="4.9" stroke="#3a3a3a" stroke-width="1" fill="none"/>
<rect x="821.6" y="96.5" width="11.8" height="11.8" rx="0" stroke="#1b70c8" stroke-width="1" fill="#84beef"/>
<rect x="836.6" y="96.5" width="12" height="11.8" rx="0" stroke="#8f8d8b" stroke-width="1" fill="#c9c7c5"/>
<rect x="821.6" y="111.6" width="11.8" height="11.9" rx="0" stroke="#e2820e" stroke-width="1" fill="#f8dc92"/>
<rect x="836.6" y="111.6" width="12" height="11.9" rx="0" stroke="#2c9a4c" stroke-width="1" fill="#a2dcaa"/>
<path d="M879.5 96.5 L879.5 123.7" stroke="#3a3a3a" stroke-width="1" fill="none" />
<rect x="879.5" y="96.6" width="9.2" height="12.8" rx="0" stroke="#d62020" stroke-width="1" fill="#fb9aa2"/>
<rect x="888.7" y="100.4" width="8.8" height="13" rx="0" stroke="#d62020" stroke-width="1" fill="#fb9aa2"/>
<path d="M927.9 108.5 L927.9 101.8 C927.9 94.6 938.5 94.6 938.5 101.8 L938.5 108.5" stroke="#3a3a3a" stroke-width="1" fill="none" />
<rect x="923.6" y="108.5" width="19" height="15" rx="0" stroke="#3a3a3a" stroke-width="1" fill="#fafafa"/>
<path d="M998.8 121 C997.5 119.8 996 119.5 994 119.5 L985.7 119.5 L985.7 97.7 L993 97.7 C996.5 97.7 998.5 98.3 999.4 100 C1000.3 98.3 1002.3 97.7 1005.8 97.7 L1013.1 97.7 L1013.1 110.8" stroke="#3a3a3a" stroke-width="1" fill="#fafafa" />
<path d="M999.4 100 L999.4 112.8" stroke="#3a3a3a" stroke-width="1" fill="none" />
<path d="M1000.6 115.3 L1003.5 115.3 L1008.6 111.2 L1008.6 125.6 L1003.5 121.6 L1000.6 121.6 Z" stroke="#2b8cd6" stroke-width="1.2" fill="#fafafa" />
<path d="M1011 115 Q1013 118.5 1011 122 M1013.8 112.6 Q1017.4 118.5 1013.8 124.6" stroke="#2b8cd6" stroke-width="1.2" fill="none" />
<rect x="1052.6" y="102.6" width="25.6" height="20.6" fill="#a0a8b8" opacity=".45"/>
<rect x="1052.1" y="102.1" width="25.4" height="20.4" fill="#f0f4fb" stroke="#8ea2c2" stroke-width="1"/>
<path d="M1077.5 102 L1077.5 122.5 L1052 122.5" fill="none" stroke="#4c6284" stroke-width="1.1"/>
<ellipse cx="1076.3" cy="103.6" rx="6" ry="5.4" fill="#fff"/>
<path d="M1054.6 118 Q1054.6 112 1059.2 112 Q1063.8 112 1063.8 118 Q1059.2 119.6 1054.6 118 Z" fill="#dc4a24" stroke="#a82a10" stroke-width=".6"/>
<circle cx="1059.2" cy="108" r="3.3" fill="#5a5a5a" stroke="#333" stroke-width=".5"/>
<circle cx="1059.8" cy="108.8" r="1.7" fill="#a8a8a8"/>
<path d="M1066.3 108 L1069.3 108 M1066.3 109.8 L1069.3 109.8 M1066.3 113.8 L1075 113.8 M1066.3 115.7 L1075 115.7 M1066.3 117.6 L1075 117.6" stroke="#4a7ad0" stroke-width="0.9" fill="none" />
<path d="M1069.6 103.2 C1070.6 98.6 1075.2 96.4 1078.6 98 L1079.4 95.2 L1083 100.4 L1077 102.2 L1077.7 100 C1075.6 99.2 1073.2 100.8 1072.6 103.6 Z" fill="#66c436" stroke="#3f9a1a" stroke-width=".5"/>
<path d="M1083 103.8 C1082 108.6 1077.4 110.6 1074 109 L1073.2 111.8 L1069.6 106.6 L1075.6 104.8 L1074.9 107 C1077 107.8 1079.4 106.2 1080 103.4 Z" fill="#66c436" stroke="#3f9a1a" stroke-width=".5"/>
<circle cx="1122.5" cy="106.3" r="10.1" stroke="#3a3a3a" stroke-width="1" fill="#fafafa"/>
<path d="M1129.8 113.4 L1140.7 124.4" stroke="#3a3a3a" stroke-width="1" fill="none" />
<path d="M55.5 324.5 L65.4 324.5 L65.4 339.1 L55.5 339.1 Q54.5 339.1 54.5 338.1 L54.5 325.5 Q54.5 324.5 55.5 324.5 Z" stroke="#333" stroke-width="1" fill="#fdfdfd" />
<path d="M54.6 336.9 L65.4 336.9" stroke="#333" stroke-width="1" fill="none" />
<path d="M56.3 335 C56.497499999999995 332.15 58.275 331.2 60.25 331.2 C62.225 331.2 64.0025 332.15 64.2 335" stroke="#333" stroke-width="1" fill="none"/>
<circle cx="60.3" cy="328.2" r="2.4" stroke="#333" stroke-width="1" fill="none"/>
<path d="M440.9 592.4 L433.2 580.2 C431.8 578 431.3 576.2 431.3 574 C431.3 568.7 435.6 564.4 440.9 564.4 C446.2 564.4 450.5 568.7 450.5 574 C450.5 576.2 450 578 448.6 580.2 Z" stroke="#9e9e9e" stroke-width="1" fill="#fdfdfd" />
<circle cx="440.9" cy="573.4" r="6.6" stroke="#9e9e9e" stroke-width="1" fill="none"/></svg><svg style="left:0;top:0" width="1" height="1"><path d="M93 143.5 L110 177 L102.2 177 L102.2 211 L84.8 211 L84.8 177 L76 177 Z" fill="#fe0000"/></svg></div></div>
</body></html>
